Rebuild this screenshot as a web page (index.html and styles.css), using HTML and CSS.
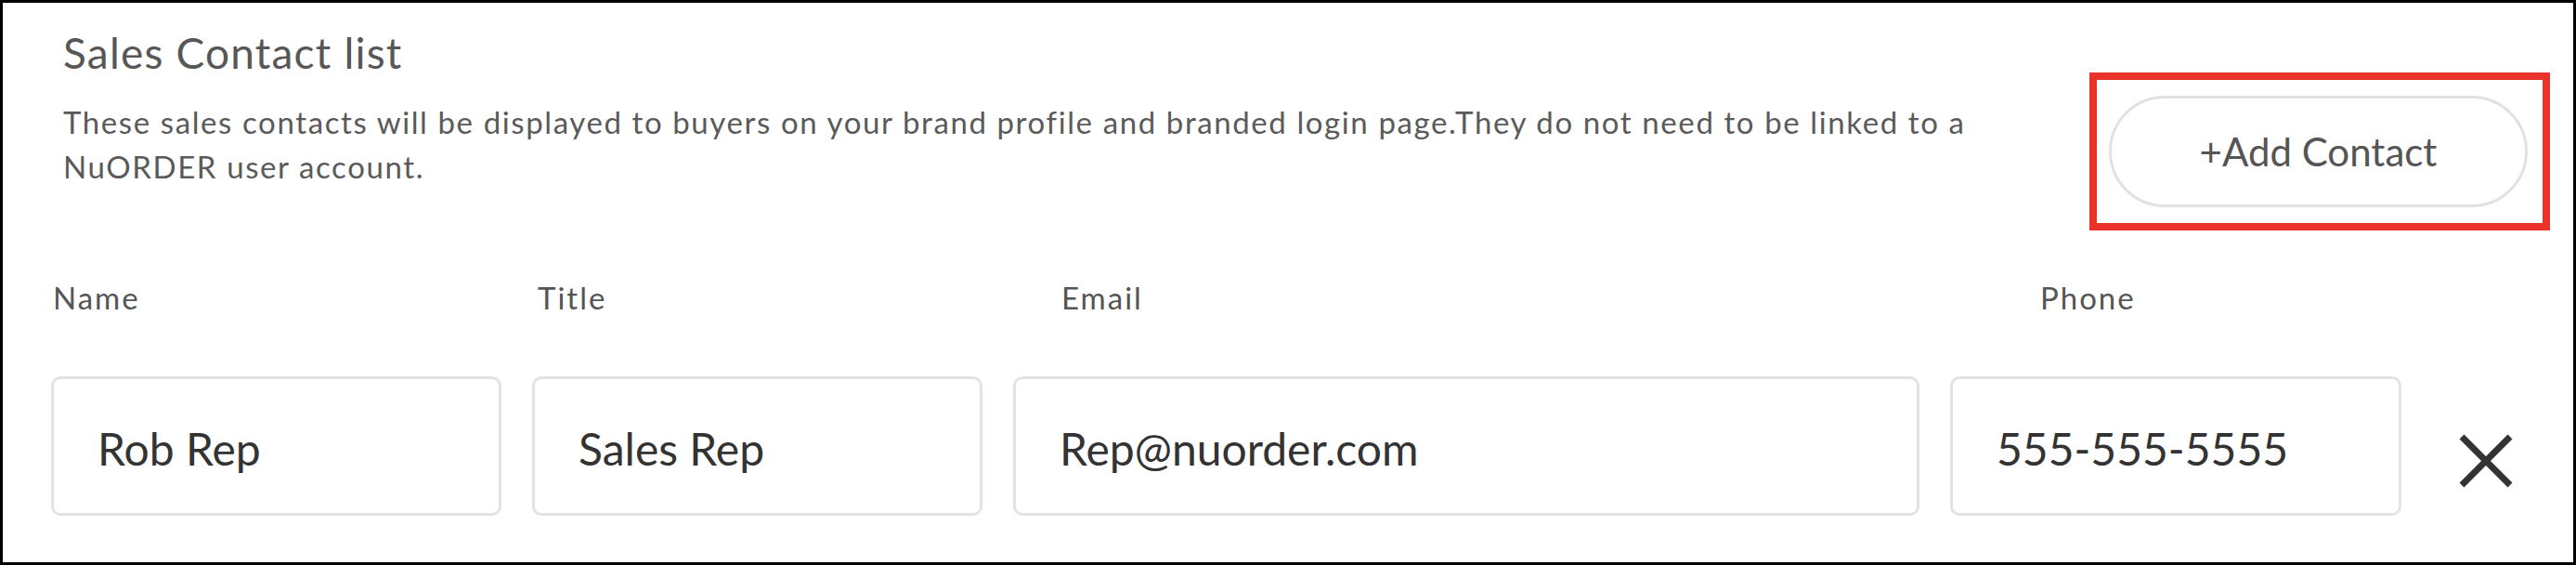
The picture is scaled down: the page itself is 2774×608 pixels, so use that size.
FILE: index.html
```html
<!DOCTYPE html>
<html lang="en">
<head>
  <meta charset="UTF-8">
  <title>Sales Contact list</title>
  <link rel="stylesheet" href="styles.css">
</head>
<body>
  <section class="contacts">
    <div class="contacts-head">
      <div class="intro">
        <h2 class="intro-title">Sales Contact list</h2>
        <p class="intro-text">These sales contacts will be displayed to buyers on your brand profile and branded login page.They do not need to be linked to a NuORDER user account.</p>
      </div>
      <div class="add-wrap">
        <button class="add-btn">+Add Contact</button>
      </div>
    </div>

    <div class="contact-labels">
      <span>Name</span>
      <span>Title</span>
      <span>Email</span>
      <span>Phone</span>
    </div>

    <div class="contact-row">
      <input class="field" type="text" value="Rob Rep">
      <input class="field" type="text" value="Sales Rep">
      <input class="field" type="text" value="Rep@nuorder.com">
      <input class="field" type="text" value="555-555-5555">
      <button class="remove-btn" aria-label="Remove contact">
        <svg width="60" height="60" viewBox="0 0 60 60">
          <path d="M4 4 L56 56 M56 4 L4 56" stroke="#333" stroke-width="7" fill="none"/>
        </svg>
      </button>
    </div>
  </section>
</body>
</html>
```

FILE: styles.css
```css
body { margin:0; padding:0; background:#fff; font-family:Lato, "Open Sans", sans-serif; }

.contacts {
  height: 608px;
  box-sizing: border-box;
  border: 3px solid #000;
  padding-top: 29px;
}

/* heading + add button */
.contacts-head {
  display: flex;
  justify-content: space-between;
  align-items: flex-start;
  padding: 0 25px 0 65px;
}
.intro-title {
  margin: 0;
  font-size: 46px;
  line-height: 50px;
  letter-spacing: 1.2px;
  font-weight: normal;
  color: #575757;
}
.intro-text {
  margin: 25px 0 0;
  width: 2110px;
  font-size: 33px;
  line-height: 48px;
  letter-spacing: 1.6px;
  color: #5a5a5a;
}
.add-wrap {
  margin-top: 46px;
  border: 8px solid #e8322a;
  padding: 17px 16px 17px 13px;
}
.add-btn {
  display: block;
  width: 451px;
  height: 120px;
  background: #fff;
  border: 3px solid #e1e1e1;
  border-radius: 60px;
  font-family: inherit;
  font-size: 42px;
  color: #555;
  cursor: pointer;
}

/* column labels */
.contact-labels {
  display: grid;
  grid-template-columns: 522px 564px 1054px auto;
  margin-top: 52px;
  padding-left: 54px;
  font-size: 33px;
  line-height: 40px;
  letter-spacing: 2px;
  color: #555;
}

/* one contact */
.contact-row {
  display: flex;
  align-items: center;
  gap: 33px;
  margin-top: 65px;
  padding-left: 52px;
}
.field {
  box-sizing: border-box;
  width: 485px;
  height: 150px;
  padding: 4px 0 0 47px;
  border: 3px solid #e3e3e3;
  border-radius: 10px;
  font-family: inherit;
  font-size: 48px;
  color: #333;
  outline: none;
}
.field:nth-child(3) { width: 976px; }
.field:nth-child(4) { width: 486px; }
.remove-btn {
  margin-left: 28px;
  margin-top: 31px;
  padding: 0;
  background: none;
  border: none;
  line-height: 0;
  cursor: pointer;
}
```
